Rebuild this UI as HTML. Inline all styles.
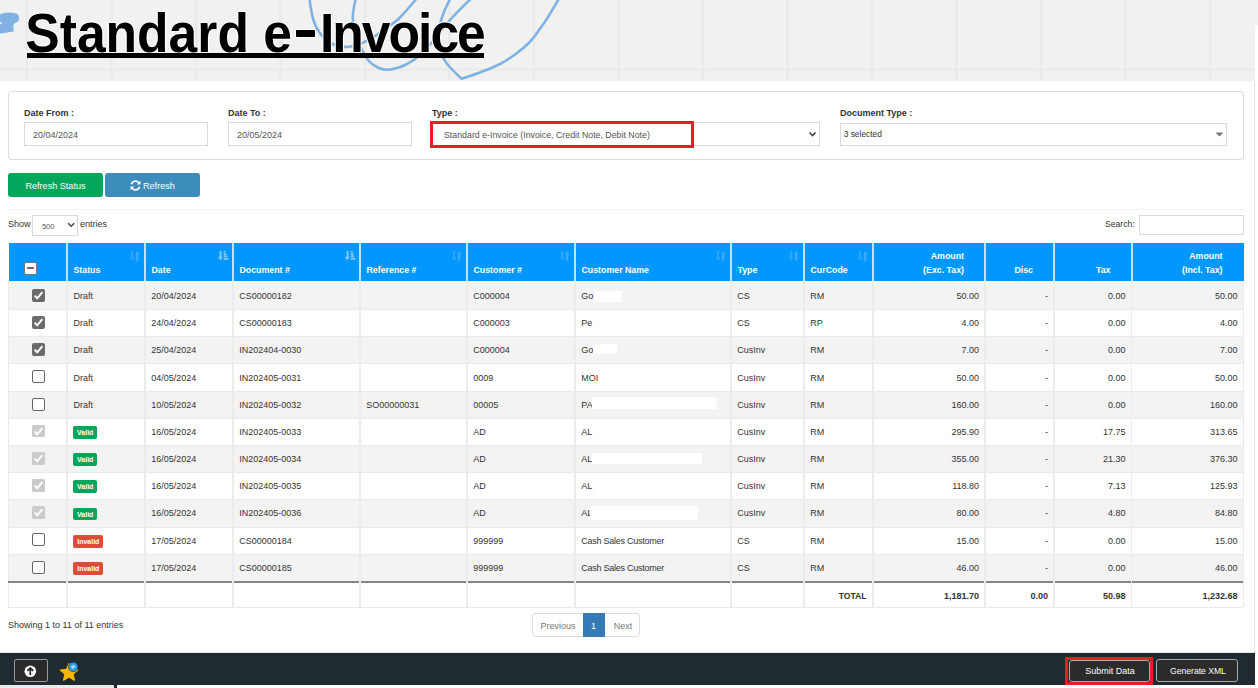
<!DOCTYPE html>
<html><head><meta charset="utf-8"><title>Standard e-Invoice</title>
<style>
*{box-sizing:border-box;margin:0;padding:0}
html,body{width:1258px;height:688px;overflow:hidden;background:#fff}
body{position:relative;font-family:"Liberation Sans",sans-serif;color:#333;font-size:9px}
.a{position:absolute}
.t{position:absolute;white-space:nowrap;line-height:1}
.lbl{font-weight:bold;color:#333;font-size:9px}
.inp{position:absolute;border:1px solid #d9dae0;background:#fff}
.th{position:absolute;top:243.30px;height:38.10px;background:#0097ff}
.ht{position:absolute;white-space:nowrap;line-height:1;color:#fff;font-weight:bold;font-size:8.8px}
.vl{position:absolute;width:1.5px}
.rw{position:absolute;left:8.3px;width:1235.2px}
.ct{position:absolute;white-space:nowrap;line-height:1;font-size:9px;color:#333}
.r{text-align:right}
.badge{position:absolute;height:12.8px;border-radius:2px;color:#fff;font-weight:bold;font-size:7px;line-height:14.4px;text-align:center;overflow:hidden}
</style></head><body>

<div class="a" style="left:0;top:0;width:1258px;height:80.5px;background:#f1f1f0;overflow:hidden">
<svg class="a" style="left:0;top:0" width="1258" height="81">
<line x1="27.0" y1="0" x2="27.0" y2="81" stroke="#eaeae9" stroke-width="2.6"/>
<line x1="111.5" y1="0" x2="111.5" y2="81" stroke="#eaeae9" stroke-width="2.6"/>
<line x1="196.0" y1="0" x2="196.0" y2="81" stroke="#eaeae9" stroke-width="2.6"/>
<line x1="280.5" y1="0" x2="280.5" y2="81" stroke="#eaeae9" stroke-width="2.6"/>
<line x1="365.0" y1="0" x2="365.0" y2="81" stroke="#eaeae9" stroke-width="2.6"/>
<line x1="449.5" y1="0" x2="449.5" y2="81" stroke="#eaeae9" stroke-width="2.6"/>
<line x1="534.0" y1="0" x2="534.0" y2="81" stroke="#eaeae9" stroke-width="2.6"/>
<line x1="618.5" y1="0" x2="618.5" y2="81" stroke="#eaeae9" stroke-width="2.6"/>
<line x1="703.0" y1="0" x2="703.0" y2="81" stroke="#eaeae9" stroke-width="2.6"/>
<line x1="787.5" y1="0" x2="787.5" y2="81" stroke="#eaeae9" stroke-width="2.6"/>
<line x1="872.0" y1="0" x2="872.0" y2="81" stroke="#eaeae9" stroke-width="2.6"/>
<line x1="956.5" y1="0" x2="956.5" y2="81" stroke="#eaeae9" stroke-width="2.6"/>
<line x1="1041.0" y1="0" x2="1041.0" y2="81" stroke="#eaeae9" stroke-width="2.6"/>
<line x1="1125.5" y1="0" x2="1125.5" y2="81" stroke="#eaeae9" stroke-width="2.6"/>
<line x1="1210.0" y1="0" x2="1210.0" y2="81" stroke="#eaeae9" stroke-width="2.6"/>
<line x1="0" y1="69.5" x2="1258" y2="69.5" stroke="#eaeae9" stroke-width="2.6"/>
</svg>
</div>
<svg class="a" style="left:0;top:0" width="30" height="40"><path d="M0 14.2 C2.5 13.6,4 13,6 12.8 C8 12.6,9 12.4,11 12.6 C14 12.9,16.5 13.6,18 14.6 C19.2 15.6,19.1 17.5,19 19.5 C18.9 21,18.2 21.8,16.5 22.3 C14.5 23,13.2 24.5,13.2 26.5 C13.3 28.5,14 30.5,13.8 31.5 C10.5 31.9,6.5 32.6,3.5 33.2 C2 33.4,1 33.5,0 33.5 Z" fill="#80b3e3"/><path d="M0 22 C1 22.3,2 23,2.2 24 C1.5 24.2,0.8 24.3,0 24.3Z" fill="#f1f1f0"/></svg>
<svg class="a" style="left:0;top:0" width="600" height="85"><g fill="none" stroke="#7fb2e4" stroke-width="2.6" stroke-linecap="round" stroke-linejoin="round">
<path d="M309.3 -3.0 C309.6 -1.1,310.1 4.6,310.9 8.7 C311.7 12.8,312.5 17.7,314.0 21.8 C315.5 25.9,317.5 29.9,320.0 33.2 C322.5 36.6,325.6 39.7,328.8 41.9 C332.0 44.1,336.0 45.4,339.3 46.2 C342.6 47.0,345.3 47.1,348.9 46.7 C352.5 46.3,356.8 45.3,361.0 43.6 C365.2 41.9,369.7 39.4,374.2 36.6 C378.7 33.8,383.7 30.2,388.0 27.0 C392.3 23.8,395.0 22.5,400.0 17.5 C405.0 12.5,415.0 0.4,418.0 -3.0"/>
<path d="M356.0 -3.0 C355.6 -1.1,354.2 5.3,353.7 8.7 C353.2 12.1,352.7 13.4,352.8 17.5 C352.9 21.6,353.1 27.8,354.5 33.0 C355.9 38.2,358.9 44.2,361.5 49.0 C364.1 53.8,366.9 58.8,369.8 62.0 C372.7 65.2,376.1 66.7,379.0 68.0 C381.9 69.3,384.2 69.8,387.2 69.8 C390.2 69.8,393.9 68.9,397.0 68.0 C400.1 67.1,402.8 66.2,406.0 64.5 C409.2 62.8,412.1 61.6,416.3 58.0 C420.6 54.4,425.9 49.3,431.5 43.0 C437.1 36.7,443.2 27.7,450.0 20.0 C456.8 12.3,468.8 0.8,472.5 -3.0"/>
<path d="M451.0 -3.0 C449.8 -0.5,445.8 7.3,444.0 12.0 C442.2 16.7,440.9 20.3,440.0 25.0 C439.1 29.7,438.6 35.2,438.8 40.0 C439.1 44.8,440.0 49.8,441.5 54.0 C443.0 58.2,444.7 60.9,448.0 65.0 C451.3 69.1,459.2 76.4,461.5 78.7  C464.6 77.7,473.6 75.0,480.0 72.5 C486.4 70.0,494.2 67.0,500.0 64.0 C505.8 61.0,510.2 58.0,515.0 54.5 C519.8 51.0,525.0 46.8,528.8 43.0 C532.6 39.2,535.0 35.6,538.0 31.5 C541.0 27.4,543.3 24.4,547.0 18.6 C550.7 12.9,557.8 0.6,560.0 -3.0"/>
</g></svg>
<div class="t" style="left:25.3px;top:9px;font-size:51.6px;font-weight:bold;color:#000;text-shadow:1px 0 0 #fff,-1px 0 0 #fff,0 1px 0 #fff,0 -1px 0 #fff;transform:scaleY(1.06);transform-origin:0 42.5px">Standard e</div>
<div class="a" style="left:295.9px;top:30.1px;width:19.3px;height:6.5px;background:#000;border-radius:0.8px;box-shadow:0 0 0 1px rgba(255,255,255,0.9)"></div>
<div class="t" style="left:320px;top:9px;font-size:51.6px;font-weight:bold;color:#000;letter-spacing:-2px;text-shadow:1px 0 0 #fff,-1px 0 0 #fff,0 1px 0 #fff,0 -1px 0 #fff;transform:scaleY(1.06);transform-origin:0 42.5px">Invoice</div>
<div class="a" style="left:27px;top:53px;width:457px;height:4.6px;background:#000"></div>
<div class="a" style="left:1255px;top:24.7px;width:3px;height:56px;background:#fff"></div>
<div class="a" style="left:1254px;top:80.5px;width:1px;height:572px;background:#dfe9d9"></div>
<div class="a" style="left:8px;top:91.2px;width:1235.5px;height:69.1px;border:1px solid #dcdcdc;border-radius:3px"></div>
<div class="t lbl" style="left:24px;top:108.5px">Date From :</div>
<div class="t lbl" style="left:228px;top:108.5px">Date To :</div>
<div class="t lbl" style="left:432px;top:108.5px">Type :</div>
<div class="t lbl" style="left:840px;top:108.5px">Document Type :</div>
<div class="inp" style="left:24px;top:122.3px;width:183.7px;height:23.4px"></div>
<div class="t" style="left:33px;top:131px;font-size:9px;color:#555">20/04/2024</div>
<div class="inp" style="left:228px;top:122.3px;width:183.7px;height:23.4px"></div>
<div class="t" style="left:237px;top:131px;font-size:9px;color:#555">20/05/2024</div>
<div class="inp" style="left:430.3px;top:122.2px;width:389.5px;height:23.6px"></div>
<div class="t" style="left:444px;top:131px;font-size:8.8px;color:#555">Standard e-Invoice (Invoice, Credit Note, Debit Note)</div>
<svg class="a" style="left:808px;top:131px" width="10" height="7"><path d="M1.5 1.5 L4.5 4.5 L7.5 1.5" fill="none" stroke="#444" stroke-width="1.6"/></svg>
<div class="a" style="left:430.3px;top:121.3px;width:263.5px;height:26.3px;border:3.3px solid #ec1c24"></div>
<div class="inp" style="left:840px;top:123px;width:387.4px;height:22.6px"></div>
<div class="t" style="left:843.7px;top:130.3px;font-size:8.4px;color:#333">3 selected</div>
<svg class="a" style="left:1214px;top:131px" width="11" height="7"><path d="M1.5 1.5 L9.5 1.5 L5.5 5.5Z" fill="#777"/></svg>
<div class="a" style="left:8px;top:173.2px;width:94.7px;height:23.8px;background:#00a65a;border-radius:3px"></div>
<div class="t" style="left:25.4px;top:181.8px;font-size:9.1px;color:#fff">Refresh Status</div>
<div class="a" style="left:105.2px;top:173.2px;width:94.5px;height:23.8px;background:#3c8dbc;border-radius:3px"></div>
<svg class="a" style="left:129px;top:178.8px" width="13" height="13"><g fill="none" stroke="#fff" stroke-width="1.6"><path d="M10.3 4.3 A4.3 4.3 0 0 0 2.4 5.3"/><path d="M2.7 8.7 A4.3 4.3 0 0 0 10.6 7.7"/></g><path d="M11.5 1.8 L11.5 5.6 L7.7 5.6Z" fill="#fff"/><path d="M1.5 11.2 L1.5 7.4 L5.3 7.4Z" fill="#fff"/></svg>
<div class="t" style="left:143px;top:181.8px;font-size:9.1px;color:#fff">Refresh</div>
<div class="a" style="left:8px;top:208.6px;width:1235.5px;height:1.6px;background:#f1f1f1"></div>
<div class="t" style="left:8px;top:219.8px;font-size:9px;color:#333">Show</div>
<div class="inp" style="left:31.5px;top:215.1px;width:46.1px;height:20.9px"></div>
<div class="t" style="left:41.9px;top:223px;font-size:7.6px;color:#555">500</div>
<svg class="a" style="left:66.5px;top:222px" width="9" height="6"><path d="M1.2 1.2 L4.2 4.2 L7.2 1.2" fill="none" stroke="#444" stroke-width="1.5"/></svg>
<div class="t" style="left:80px;top:219.8px;font-size:9px;color:#333">entries</div>
<div class="t" style="left:1105px;top:220px;font-size:8.6px;color:#333">Search:</div>
<div class="inp" style="left:1138.5px;top:215.3px;width:105px;height:19.7px"></div>
<div class="th" style="left:9px;width:1234.5px"></div>
<div class="vl" style="left:66.20px;top:243.30px;height:38.10px;width:2px;background:#c2e1fb"></div>
<div class="vl" style="left:144.20px;top:243.30px;height:38.10px;width:2px;background:#c2e1fb"></div>
<div class="vl" style="left:232.20px;top:243.30px;height:38.10px;width:2px;background:#c2e1fb"></div>
<div class="vl" style="left:359.20px;top:243.30px;height:38.10px;width:2px;background:#c2e1fb"></div>
<div class="vl" style="left:466.20px;top:243.30px;height:38.10px;width:2px;background:#c2e1fb"></div>
<div class="vl" style="left:574.20px;top:243.30px;height:38.10px;width:2px;background:#c2e1fb"></div>
<div class="vl" style="left:730.20px;top:243.30px;height:38.10px;width:2px;background:#c2e1fb"></div>
<div class="vl" style="left:803.20px;top:243.30px;height:38.10px;width:2px;background:#c2e1fb"></div>
<div class="vl" style="left:872.20px;top:243.30px;height:38.10px;width:2px;background:#c2e1fb"></div>
<div class="vl" style="left:984.20px;top:243.30px;height:38.10px;width:2px;background:#c2e1fb"></div>
<div class="vl" style="left:1053.20px;top:243.30px;height:38.10px;width:2px;background:#c2e1fb"></div>
<div class="vl" style="left:1130.70px;top:243.30px;height:38.10px;width:2px;background:#c2e1fb"></div>
<div class="a" style="left:24.3px;top:262px;width:12.6px;height:12.6px;background:#fff;border:1.5px solid #777;border-radius:2px"></div>
<div class="a" style="left:26.9px;top:267.2px;width:7.4px;height:2.3px;background:#666;border-radius:1px"></div>
<div class="ht" style="left:73.5px;top:265.6px">Status</div>
<svg class="a" style="left:129.9px;top:250.9px" width="11" height="11"><path d="M1 0 h2.2 v6.2 h1.6 l-2.4 3.5 l-2.4 -3.5 h1z" fill="#2ea3ff"/><path d="M5.9 9.7 h2.4 v-6.4 h1.3 l-2.3 -3.3 l-2.3 3.3 h0.9z" fill="#3aa9ff"/></svg>
<div class="ht" style="left:151.5px;top:265.6px">Date</div>
<svg class="a" style="left:217.5px;top:251px" width="12" height="11"><g fill="#88caff"><path d="M1.6 0 h1.9 v5.8 h1.3 l-2.4 3.8 l-2.4 -3.8 h1.6z"/><path d="M5.6 0 h2.1 v1.4 h-2.1z M5.6 2.2 h2.9 v1.7 h-2.9z M5.6 4.6 h3.7 v1.5 h-3.7z M5.6 6.8 h4.8 v1.9 h-4.8z"/></g></svg>
<div class="ht" style="left:239.5px;top:265.6px">Document #</div>
<svg class="a" style="left:344.5px;top:251px" width="12" height="11"><g fill="#88caff"><path d="M1.6 0 h1.9 v5.8 h1.3 l-2.4 3.8 l-2.4 -3.8 h1.6z"/><path d="M5.6 0 h2.1 v1.4 h-2.1z M5.6 2.2 h2.9 v1.7 h-2.9z M5.6 4.6 h3.7 v1.5 h-3.7z M5.6 6.8 h4.8 v1.9 h-4.8z"/></g></svg>
<div class="ht" style="left:366.5px;top:265.6px">Reference #</div>
<svg class="a" style="left:451.9px;top:250.9px" width="11" height="11"><path d="M1 0 h2.2 v6.2 h1.6 l-2.4 3.5 l-2.4 -3.5 h1z" fill="#2ea3ff"/><path d="M5.9 9.7 h2.4 v-6.4 h1.3 l-2.3 -3.3 l-2.3 3.3 h0.9z" fill="#3aa9ff"/></svg>
<div class="ht" style="left:473.5px;top:265.6px">Customer #</div>
<svg class="a" style="left:559.9px;top:250.9px" width="11" height="11"><path d="M1 0 h2.2 v6.2 h1.6 l-2.4 3.5 l-2.4 -3.5 h1z" fill="#2ea3ff"/><path d="M5.9 9.7 h2.4 v-6.4 h1.3 l-2.3 -3.3 l-2.3 3.3 h0.9z" fill="#3aa9ff"/></svg>
<div class="ht" style="left:581.5px;top:265.6px">Customer Name</div>
<svg class="a" style="left:715.9px;top:250.9px" width="11" height="11"><path d="M1 0 h2.2 v6.2 h1.6 l-2.4 3.5 l-2.4 -3.5 h1z" fill="#2ea3ff"/><path d="M5.9 9.7 h2.4 v-6.4 h1.3 l-2.3 -3.3 l-2.3 3.3 h0.9z" fill="#3aa9ff"/></svg>
<div class="ht" style="left:737.5px;top:265.6px">Type</div>
<svg class="a" style="left:788.9px;top:250.9px" width="11" height="11"><path d="M1 0 h2.2 v6.2 h1.6 l-2.4 3.5 l-2.4 -3.5 h1z" fill="#2ea3ff"/><path d="M5.9 9.7 h2.4 v-6.4 h1.3 l-2.3 -3.3 l-2.3 3.3 h0.9z" fill="#3aa9ff"/></svg>
<div class="ht" style="left:810.5px;top:265.6px">CurCode</div>
<svg class="a" style="left:857.9px;top:250.9px" width="11" height="11"><path d="M1 0 h2.2 v6.2 h1.6 l-2.4 3.5 l-2.4 -3.5 h1z" fill="#2ea3ff"/><path d="M5.9 9.7 h2.4 v-6.4 h1.3 l-2.3 -3.3 l-2.3 3.3 h0.9z" fill="#3aa9ff"/></svg>
<div class="ht r" style="left:873.0px;width:91.0px;top:251.8px;text-align:right">Amount</div>
<div class="ht r" style="left:873.0px;width:91.0px;top:265.6px;text-align:right">(Exc. Tax)</div>
<div class="ht r" style="left:985.0px;width:48.0px;top:265.6px;text-align:right">Disc</div>
<div class="ht r" style="left:1054.0px;width:56.5px;top:265.6px;text-align:right">Tax</div>
<div class="ht r" style="left:1131.5px;width:91.0px;top:251.8px;text-align:right">Amount</div>
<div class="ht r" style="left:1131.5px;width:91.0px;top:265.6px;text-align:right">(Incl. Tax)</div>
<div class="rw" style="top:281.40px;height:28.18px;background:#f3f3f3"></div>
<div class="rw" style="top:309.58px;height:27.18px;background:#fff"></div>
<div class="rw" style="top:309.08px;height:1px;background:#eaeaea"></div>
<div class="rw" style="top:336.76px;height:27.18px;background:#f3f3f3"></div>
<div class="rw" style="top:336.26px;height:1px;background:#eaeaea"></div>
<div class="rw" style="top:363.94px;height:27.18px;background:#fff"></div>
<div class="rw" style="top:363.44px;height:1px;background:#eaeaea"></div>
<div class="rw" style="top:391.12px;height:27.18px;background:#f3f3f3"></div>
<div class="rw" style="top:390.62px;height:1px;background:#eaeaea"></div>
<div class="rw" style="top:418.30px;height:27.18px;background:#fff"></div>
<div class="rw" style="top:417.80px;height:1px;background:#eaeaea"></div>
<div class="rw" style="top:445.48px;height:27.18px;background:#f3f3f3"></div>
<div class="rw" style="top:444.98px;height:1px;background:#eaeaea"></div>
<div class="rw" style="top:472.66px;height:27.18px;background:#fff"></div>
<div class="rw" style="top:472.16px;height:1px;background:#eaeaea"></div>
<div class="rw" style="top:499.84px;height:27.18px;background:#f3f3f3"></div>
<div class="rw" style="top:499.34px;height:1px;background:#eaeaea"></div>
<div class="rw" style="top:527.02px;height:27.18px;background:#fff"></div>
<div class="rw" style="top:526.52px;height:1px;background:#eaeaea"></div>
<div class="rw" style="top:554.20px;height:27.18px;background:#f3f3f3"></div>
<div class="rw" style="top:553.70px;height:1px;background:#eaeaea"></div>
<div class="a" style="left:8px;top:281.40px;width:1px;height:325.90px;background:#eaeaea"></div>
<div class="a" style="left:1242.5px;top:281.40px;width:1px;height:325.90px;background:#eaeaea"></div>
<div class="vl" style="left:66.45px;top:281.40px;height:325.90px;background:#ececec;z-index:1"></div>
<div class="vl" style="left:144.45px;top:281.40px;height:325.90px;background:#ececec;z-index:1"></div>
<div class="vl" style="left:232.45px;top:281.40px;height:325.90px;background:#ececec;z-index:1"></div>
<div class="vl" style="left:359.45px;top:281.40px;height:325.90px;background:#ececec;z-index:1"></div>
<div class="vl" style="left:466.45px;top:281.40px;height:325.90px;background:#ececec;z-index:1"></div>
<div class="vl" style="left:574.45px;top:281.40px;height:325.90px;background:#ececec;z-index:1"></div>
<div class="vl" style="left:730.45px;top:281.40px;height:325.90px;background:#ececec;z-index:1"></div>
<div class="vl" style="left:803.45px;top:281.40px;height:325.90px;background:#ececec;z-index:1"></div>
<div class="vl" style="left:872.45px;top:281.40px;height:325.90px;background:#ececec;z-index:1"></div>
<div class="vl" style="left:984.45px;top:281.40px;height:325.90px;background:#ececec;z-index:1"></div>
<div class="vl" style="left:1053.45px;top:281.40px;height:325.90px;background:#ececec;z-index:1"></div>
<div class="vl" style="left:1130.95px;top:281.40px;height:325.90px;background:#ececec;z-index:1"></div>
<div class="a" style="left:32px;top:288.80px;width:13px;height:13px;background:#6b6b6b;border-radius:2px"></div>
<svg class="a" style="left:32px;top:288.80px" width="13" height="13"><path d="M2.6 6.6 L5.2 9.3 L10.4 3.2" fill="none" stroke="#fff" stroke-width="2"/></svg>
<div class="ct" style="left:73.5px;top:292.00px">Draft</div>
<div class="ct" style="left:151.3px;top:292.00px">20/04/2024</div>
<div class="ct" style="left:239.3px;top:292.00px">CS00000182</div>
<div class="ct" style="left:473.3px;top:292.00px">C000004</div>
<div class="ct" style="left:581.3px;top:292.00px">Go</div>
<div class="ct" style="left:737.3px;top:292.00px">CS</div>
<div class="ct" style="left:810.3px;top:292.00px">RM</div>
<div class="ct r" style="left:873.0px;width:106.0px;top:292.00px">50.00</div>
<div class="ct r" style="left:985.0px;width:63.0px;top:292.00px">-</div>
<div class="ct r" style="left:1054.0px;width:71.5px;top:292.00px">0.00</div>
<div class="ct r" style="left:1131.5px;width:106.0px;top:292.00px">50.00</div>
<div class="a" style="left:594.9px;top:290.7px;width:27.4px;height:11.7px;background:#fff"></div>
<div class="a" style="left:32px;top:315.98px;width:13px;height:13px;background:#6b6b6b;border-radius:2px"></div>
<svg class="a" style="left:32px;top:315.98px" width="13" height="13"><path d="M2.6 6.6 L5.2 9.3 L10.4 3.2" fill="none" stroke="#fff" stroke-width="2"/></svg>
<div class="ct" style="left:73.5px;top:319.18px">Draft</div>
<div class="ct" style="left:151.3px;top:319.18px">24/04/2024</div>
<div class="ct" style="left:239.3px;top:319.18px">CS00000183</div>
<div class="ct" style="left:473.3px;top:319.18px">C000003</div>
<div class="ct" style="left:581.3px;top:319.18px">Pe</div>
<div class="ct" style="left:737.3px;top:319.18px">CS</div>
<div class="ct" style="left:810.3px;top:319.18px">RP</div>
<div class="ct r" style="left:873.0px;width:106.0px;top:319.18px">4.00</div>
<div class="ct r" style="left:985.0px;width:63.0px;top:319.18px">-</div>
<div class="ct r" style="left:1054.0px;width:71.5px;top:319.18px">0.00</div>
<div class="ct r" style="left:1131.5px;width:106.0px;top:319.18px">4.00</div>
<div class="a" style="left:32px;top:343.16px;width:13px;height:13px;background:#6b6b6b;border-radius:2px"></div>
<svg class="a" style="left:32px;top:343.16px" width="13" height="13"><path d="M2.6 6.6 L5.2 9.3 L10.4 3.2" fill="none" stroke="#fff" stroke-width="2"/></svg>
<div class="ct" style="left:73.5px;top:346.36px">Draft</div>
<div class="ct" style="left:151.3px;top:346.36px">25/04/2024</div>
<div class="ct" style="left:239.3px;top:346.36px">IN202404-0030</div>
<div class="ct" style="left:473.3px;top:346.36px">C000004</div>
<div class="ct" style="left:581.3px;top:346.36px">Go</div>
<div class="ct" style="left:737.3px;top:346.36px">CusInv</div>
<div class="ct" style="left:810.3px;top:346.36px">RM</div>
<div class="ct r" style="left:873.0px;width:106.0px;top:346.36px">7.00</div>
<div class="ct r" style="left:985.0px;width:63.0px;top:346.36px">-</div>
<div class="ct r" style="left:1054.0px;width:71.5px;top:346.36px">0.00</div>
<div class="ct r" style="left:1131.5px;width:106.0px;top:346.36px">7.00</div>
<div class="a" style="left:592.7px;top:343.5px;width:24.5px;height:10.6px;background:#fff"></div>
<div class="a" style="left:32px;top:370.34px;width:13px;height:13px;background:#fff;border:1.3px solid #666;border-radius:2px"></div>
<div class="ct" style="left:73.5px;top:373.54px">Draft</div>
<div class="ct" style="left:151.3px;top:373.54px">04/05/2024</div>
<div class="ct" style="left:239.3px;top:373.54px">IN202405-0031</div>
<div class="ct" style="left:473.3px;top:373.54px">0009</div>
<div class="ct" style="left:581.3px;top:373.54px">MOI</div>
<div class="ct" style="left:737.3px;top:373.54px">CusInv</div>
<div class="ct" style="left:810.3px;top:373.54px">RM</div>
<div class="ct r" style="left:873.0px;width:106.0px;top:373.54px">50.00</div>
<div class="ct r" style="left:985.0px;width:63.0px;top:373.54px">-</div>
<div class="ct r" style="left:1054.0px;width:71.5px;top:373.54px">0.00</div>
<div class="ct r" style="left:1131.5px;width:106.0px;top:373.54px">50.00</div>
<div class="a" style="left:32px;top:397.52px;width:13px;height:13px;background:#fff;border:1.3px solid #666;border-radius:2px"></div>
<div class="ct" style="left:73.5px;top:400.72px">Draft</div>
<div class="ct" style="left:151.3px;top:400.72px">10/05/2024</div>
<div class="ct" style="left:239.3px;top:400.72px">IN202405-0032</div>
<div class="ct" style="left:366.3px;top:400.72px">SO00000031</div>
<div class="ct" style="left:473.3px;top:400.72px">00005</div>
<div class="ct" style="left:581.3px;top:400.72px">PA</div>
<div class="ct" style="left:737.3px;top:400.72px">CusInv</div>
<div class="ct" style="left:810.3px;top:400.72px">RM</div>
<div class="ct r" style="left:873.0px;width:106.0px;top:400.72px">160.00</div>
<div class="ct r" style="left:985.0px;width:63.0px;top:400.72px">-</div>
<div class="ct r" style="left:1054.0px;width:71.5px;top:400.72px">0.00</div>
<div class="ct r" style="left:1131.5px;width:106.0px;top:400.72px">160.00</div>
<div class="a" style="left:592.0px;top:396.5px;width:125.4px;height:12.1px;background:#fff"></div>
<div class="a" style="left:32px;top:424.70px;width:12.5px;height:12.7px;background:#cbcbcb;border-radius:1.5px"></div>
<svg class="a" style="left:32px;top:424.70px" width="13" height="13"><path d="M2.6 6.6 L5.2 9.3 L10.4 3.2" fill="none" stroke="#fff" stroke-width="2"/></svg>
<div class="badge" style="left:73.1px;top:426.00px;width:24.2px;background:#00a65a">Valid</div>
<div class="ct" style="left:151.3px;top:427.90px">16/05/2024</div>
<div class="ct" style="left:239.3px;top:427.90px">IN202405-0033</div>
<div class="ct" style="left:473.3px;top:427.90px">AD</div>
<div class="ct" style="left:581.3px;top:427.90px">AL</div>
<div class="ct" style="left:737.3px;top:427.90px">CusInv</div>
<div class="ct" style="left:810.3px;top:427.90px">RM</div>
<div class="ct r" style="left:873.0px;width:106.0px;top:427.90px">295.90</div>
<div class="ct r" style="left:985.0px;width:63.0px;top:427.90px">-</div>
<div class="ct r" style="left:1054.0px;width:71.5px;top:427.90px">17.75</div>
<div class="ct r" style="left:1131.5px;width:106.0px;top:427.90px">313.65</div>
<div class="a" style="left:32px;top:451.88px;width:12.5px;height:12.7px;background:#cbcbcb;border-radius:1.5px"></div>
<svg class="a" style="left:32px;top:451.88px" width="13" height="13"><path d="M2.6 6.6 L5.2 9.3 L10.4 3.2" fill="none" stroke="#fff" stroke-width="2"/></svg>
<div class="badge" style="left:73.1px;top:453.18px;width:24.2px;background:#00a65a">Valid</div>
<div class="ct" style="left:151.3px;top:455.08px">16/05/2024</div>
<div class="ct" style="left:239.3px;top:455.08px">IN202405-0034</div>
<div class="ct" style="left:473.3px;top:455.08px">AD</div>
<div class="ct" style="left:581.3px;top:455.08px">AL</div>
<div class="ct" style="left:737.3px;top:455.08px">CusInv</div>
<div class="ct" style="left:810.3px;top:455.08px">RM</div>
<div class="ct r" style="left:873.0px;width:106.0px;top:455.08px">355.00</div>
<div class="ct r" style="left:985.0px;width:63.0px;top:455.08px">-</div>
<div class="ct r" style="left:1054.0px;width:71.5px;top:455.08px">21.30</div>
<div class="ct r" style="left:1131.5px;width:106.0px;top:455.08px">376.30</div>
<div class="a" style="left:592.0px;top:453.2px;width:110.0px;height:11.0px;background:#fff"></div>
<div class="a" style="left:32px;top:479.06px;width:12.5px;height:12.7px;background:#cbcbcb;border-radius:1.5px"></div>
<svg class="a" style="left:32px;top:479.06px" width="13" height="13"><path d="M2.6 6.6 L5.2 9.3 L10.4 3.2" fill="none" stroke="#fff" stroke-width="2"/></svg>
<div class="badge" style="left:73.1px;top:480.36px;width:24.2px;background:#00a65a">Valid</div>
<div class="ct" style="left:151.3px;top:482.26px">16/05/2024</div>
<div class="ct" style="left:239.3px;top:482.26px">IN202405-0035</div>
<div class="ct" style="left:473.3px;top:482.26px">AD</div>
<div class="ct" style="left:581.3px;top:482.26px">AL</div>
<div class="ct" style="left:737.3px;top:482.26px">CusInv</div>
<div class="ct" style="left:810.3px;top:482.26px">RM</div>
<div class="ct r" style="left:873.0px;width:106.0px;top:482.26px">118.80</div>
<div class="ct r" style="left:985.0px;width:63.0px;top:482.26px">-</div>
<div class="ct r" style="left:1054.0px;width:71.5px;top:482.26px">7.13</div>
<div class="ct r" style="left:1131.5px;width:106.0px;top:482.26px">125.93</div>
<div class="a" style="left:32px;top:506.24px;width:12.5px;height:12.7px;background:#cbcbcb;border-radius:1.5px"></div>
<svg class="a" style="left:32px;top:506.24px" width="13" height="13"><path d="M2.6 6.6 L5.2 9.3 L10.4 3.2" fill="none" stroke="#fff" stroke-width="2"/></svg>
<div class="badge" style="left:73.1px;top:507.54px;width:24.2px;background:#00a65a">Valid</div>
<div class="ct" style="left:151.3px;top:509.44px">16/05/2024</div>
<div class="ct" style="left:239.3px;top:509.44px">IN202405-0036</div>
<div class="ct" style="left:473.3px;top:509.44px">AD</div>
<div class="ct" style="left:581.3px;top:509.44px">AL</div>
<div class="ct" style="left:737.3px;top:509.44px">CusInv</div>
<div class="ct" style="left:810.3px;top:509.44px">RM</div>
<div class="ct r" style="left:873.0px;width:106.0px;top:509.44px">80.00</div>
<div class="ct r" style="left:985.0px;width:63.0px;top:509.44px">-</div>
<div class="ct r" style="left:1054.0px;width:71.5px;top:509.44px">4.80</div>
<div class="ct r" style="left:1131.5px;width:106.0px;top:509.44px">84.80</div>
<div class="a" style="left:590.0px;top:506.2px;width:108.1px;height:13.5px;background:#fff"></div>
<div class="a" style="left:32px;top:533.42px;width:13px;height:13px;background:#fff;border:1.3px solid #666;border-radius:2px"></div>
<div class="badge" style="left:73.2px;top:534.72px;width:30.2px;background:#dd4b39">Invalid</div>
<div class="ct" style="left:151.3px;top:536.62px">17/05/2024</div>
<div class="ct" style="left:239.3px;top:536.62px">CS00000184</div>
<div class="ct" style="left:473.3px;top:536.62px">999999</div>
<div class="ct" style="left:581.3px;top:536.62px;letter-spacing:-0.25px">Cash Sales Customer</div>
<div class="ct" style="left:737.3px;top:536.62px">CS</div>
<div class="ct" style="left:810.3px;top:536.62px">RM</div>
<div class="ct r" style="left:873.0px;width:106.0px;top:536.62px">15.00</div>
<div class="ct r" style="left:985.0px;width:63.0px;top:536.62px">-</div>
<div class="ct r" style="left:1054.0px;width:71.5px;top:536.62px">0.00</div>
<div class="ct r" style="left:1131.5px;width:106.0px;top:536.62px">15.00</div>
<div class="a" style="left:32px;top:560.60px;width:13px;height:13px;background:#fff;border:1.3px solid #666;border-radius:2px"></div>
<div class="badge" style="left:73.2px;top:561.90px;width:30.2px;background:#dd4b39">Invalid</div>
<div class="ct" style="left:151.3px;top:563.80px">17/05/2024</div>
<div class="ct" style="left:239.3px;top:563.80px">CS00000185</div>
<div class="ct" style="left:473.3px;top:563.80px">999999</div>
<div class="ct" style="left:581.3px;top:563.80px;letter-spacing:-0.25px">Cash Sales Customer</div>
<div class="ct" style="left:737.3px;top:563.80px">CS</div>
<div class="ct" style="left:810.3px;top:563.80px">RM</div>
<div class="ct r" style="left:873.0px;width:106.0px;top:563.80px">46.00</div>
<div class="ct r" style="left:985.0px;width:63.0px;top:563.80px">-</div>
<div class="ct r" style="left:1054.0px;width:71.5px;top:563.80px">0.00</div>
<div class="ct r" style="left:1131.5px;width:106.0px;top:563.80px">46.00</div>
<div class="rw" style="top:581.18px;height:1.7px;background:#858585"></div>
<div class="rw" style="top:606.8px;height:1px;background:#eaeaea"></div>
<div class="ct r" style="left:804.0px;width:62.5px;top:592.20px;font-weight:bold;font-size:8.6px">TOTAL</div>
<div class="ct r" style="left:873.0px;width:106.0px;top:591.90px;font-weight:bold">1,181.70</div>
<div class="ct r" style="left:985.0px;width:63.0px;top:591.90px;font-weight:bold">0.00</div>
<div class="ct r" style="left:1054.0px;width:71.5px;top:591.90px;font-weight:bold">50.98</div>
<div class="ct r" style="left:1131.5px;width:106.0px;top:591.90px;font-weight:bold">1,232.68</div>
<div class="t" style="left:8px;top:621px;font-size:9px;color:#333">Showing 1 to 11 of 11 entries</div>
<div class="a" style="left:531.5px;top:613.3px;width:108.1px;height:23.4px;border:1px solid #ddd;border-radius:3px"></div>
<div class="a" style="left:583.1px;top:613.3px;width:21.8px;height:23.4px;background:#337ab7"></div>
<div class="t" style="left:540.6px;top:622px;font-size:9px;color:#777">Previous</div>
<div class="t" style="left:591px;top:622px;font-size:9px;color:#fff">1</div>
<div class="t" style="left:613.8px;top:622px;font-size:9px;color:#777">Next</div>
<div class="a" style="left:0;top:651.5px;width:1255px;height:1.3px;background:#e3ebdf"></div>
<div class="a" style="left:0;top:652.8px;width:1255px;height:32.1px;background:#1f2b31"></div>
<div class="a" style="left:0;top:684.9px;width:114px;height:3.1px;background:#ebebeb"></div>
<div class="a" style="left:114px;top:684.9px;width:3px;height:3.1px;background:#1f2b31"></div>
<div class="a" style="left:14.3px;top:659.2px;width:33.7px;height:22.7px;background:#2a2a2a;border:1px solid #999;border-radius:2px"></div>
<svg class="a" style="left:23px;top:663.5px" width="15" height="15"><circle cx="7.3" cy="7.3" r="5.8" fill="#fff"/><path d="M7.3 11 V4.2 M4.4 6.9 L7.3 4 L10.2 6.9" fill="none" stroke="#222" stroke-width="1.7"/></svg>
<svg class="a" style="left:59px;top:661px" width="22" height="22"><path d="M10.0 2.6 L12.5 8.3 L18.7 9.0 L14.1 13.1 L15.4 19.2 L10.0 16.1 L4.6 19.2 L5.9 13.1 L1.3 9.0 L7.5 8.3Z" fill="#f6b900" stroke="#f6b900" stroke-width="1.2" stroke-linejoin="round"/><circle cx="14.2" cy="5.9" r="4.7" fill="#2f9df2" stroke="#1f2b31" stroke-width="0.7"/><path d="M14.2 3.7 V8.1 M12 5.9 H16.4" stroke="#c4e6ff" stroke-width="1.1"/></svg>
<div class="a" style="left:1064.7px;top:657px;width:88.7px;height:28px;border:3.3px solid #ec1c24"></div>
<div class="a" style="left:1068.8px;top:660px;width:81.4px;height:22.2px;background:#2b2b2b;border:1px solid #aaa;border-radius:3px"></div>
<div class="t" style="left:1085.3px;top:667.3px;font-size:9px;color:#fff">Submit Data</div>
<div class="a" style="left:1156.3px;top:659px;width:81.3px;height:23.2px;background:#2b2b2b;border:1px solid #aaa;border-radius:3px"></div>
<div class="t" style="left:1170px;top:666.6px;font-size:8.6px;color:#fff">Generate XML</div>
</body></html>
